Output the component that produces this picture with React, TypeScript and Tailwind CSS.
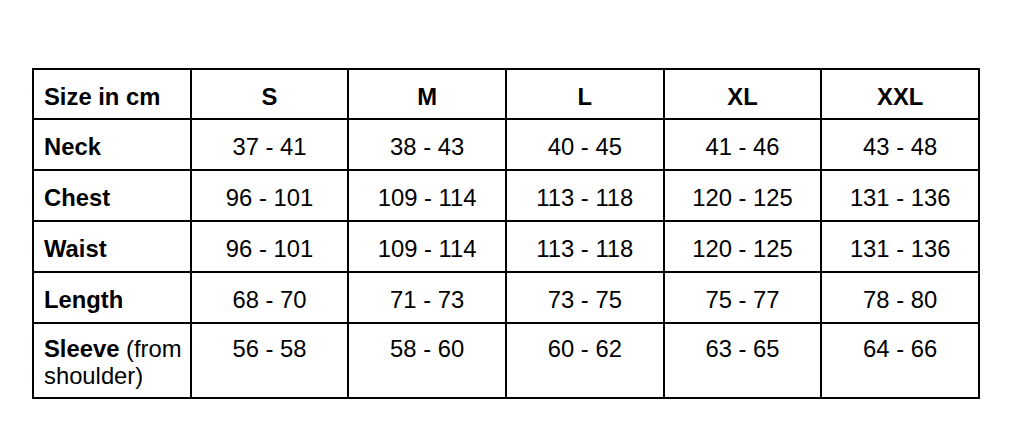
import React from "react";

const sizes = ["S", "M", "L", "XL", "XXL"];
const rows: { label: React.ReactNode; values: string[]; h: string }[] = [
  { label: <b>Neck</b>, values: ["37 - 41", "38 - 43", "40 - 45", "41 - 46", "43 - 48"], h: "h-[49px] pt-[12px]" },
  { label: <b>Chest</b>, values: ["96 - 101", "109 - 114", "113 - 118", "120 - 125", "131 - 136"], h: "h-[49px] pt-[12px]" },
  { label: <b>Waist</b>, values: ["96 - 101", "109 - 114", "113 - 118", "120 - 125", "131 - 136"], h: "h-[49px] pt-[12px]" },
  { label: <b>Length</b>, values: ["68 - 70", "71 - 73", "73 - 75", "75 - 77", "78 - 80"], h: "h-[49px] pt-[12px]" },
  {
    label: (
      <>
        <b>Sleeve</b> (from shoulder)
      </>
    ),
    values: ["56 - 58", "58 - 60", "60 - 62", "63 - 65", "64 - 66"],
    h: "h-[73px] pt-[11px] leading-[27px]",
  },
];

export default function App() {
  return (
    <div
      className="w-[1024px] h-[443px] bg-white text-black pt-[68px] pl-[32px]"
      style={{ fontFamily: '"Liberation Sans", Arial, sans-serif' }}
    >
      <div className="w-[948px] grid grid-cols-6 gap-[2px] p-[2px] bg-black text-[23.8px] leading-[29px]">
        <div className="bg-white h-[48px] pt-[12px] pl-[10px] font-bold">Size in cm</div>
        {sizes.map((s) => (
          <div key={s} className="bg-white h-[48px] pt-[12px] text-center font-bold">
            {s}
          </div>
        ))}
        {rows.map((r, i) => (
          <React.Fragment key={i}>
            <div className={`bg-white ${r.h} pl-[10px] pr-[4px]`}>{r.label}</div>
            {r.values.map((v, j) => (
              <div key={j} className={`bg-white ${r.h} text-center`}>
                {v}
              </div>
            ))}
          </React.Fragment>
        ))}
      </div>
    </div>
  );
}
